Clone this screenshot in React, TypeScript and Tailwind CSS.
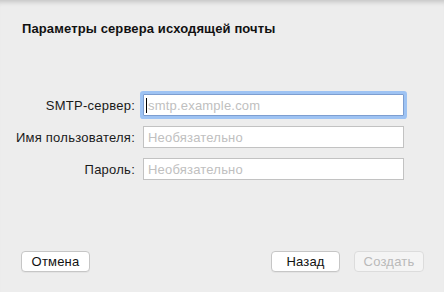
import React from "react";

const font = { fontFamily: '"Liberation Sans", Arial, sans-serif' };

function Field({ label, placeholder, focused }: { label: string; placeholder: string; focused?: boolean }) {
  return (
    <div className="flex items-center h-[22px]">
      <div className="w-[136px] pr-[1px] text-right text-[13px] leading-[16px] tracking-[0.25px] text-[#1a1a1a] pt-[2px]">{label}</div>
      <div className="ml-[7px] relative w-[261px] h-[22px]">
        <div
          className={
            focused
              ? "w-full h-full bg-white border border-[#7d9ed0] shadow-[0_0_0_3px_#9ec3f3] rounded-[1px] flex items-center pl-[4px]"
              : "w-full h-full bg-white border border-[#c2c2c2] flex items-center pl-[4px]"
          }
        >
          {focused && <span className="absolute left-[3px] top-[4px] w-[1px] h-[15px] bg-black" />}
          <span className="text-[13px] leading-[16px] tracking-[0.2px] text-[#c0c0c0] pt-[1px]">{placeholder}</span>
        </div>
      </div>
    </div>
  );
}

export default function App() {
  return (
    <div
      style={font}
      className="w-[444px] h-[292px] bg-[#ededed] flex flex-col shadow-[inset_0_6px_5px_-4px_rgba(0,0,0,0.18)]"
    >
      <div className="pt-[21px] pl-[22px] text-[13px] leading-[16px] font-bold tracking-[0.12px] text-[#111]">
        Параметры сервера исходящей почты
      </div>
      <div className="mt-[57px] flex flex-col gap-[10px]">
        <Field label="SMTP-сервер:" placeholder="smtp.example.com" focused />
        <Field label="Имя пользователя:" placeholder="Необязательно" />
        <Field label="Пароль:" placeholder="Необязательно" />
      </div>
      <div className="mt-auto mb-[20px] flex items-center px-[21px]">
        <button className="w-[69px] h-[21px] bg-white border border-[#c6c6c6] rounded-[4px] text-[13px] leading-[16px] tracking-[0.2px] text-[#111] shadow-[0_1px_0_rgba(0,0,0,0.04)]">
          Отмена
        </button>
        <div className="flex-1" />
        <button className="w-[69px] h-[21px] bg-white border border-[#c6c6c6] rounded-[4px] text-[13px] leading-[16px] tracking-[0.2px] text-[#111] shadow-[0_1px_0_rgba(0,0,0,0.04)]">
          Назад
        </button>
        <button className="ml-[14px] mr-[-1px] w-[70px] h-[21px] bg-[#f4f4f4] border border-[#dcdcdc] rounded-[4px] text-[13px] leading-[16px] tracking-[0.2px] text-[#b9b9b9]">
          Создать
        </button>
      </div>
    </div>
  );
}
